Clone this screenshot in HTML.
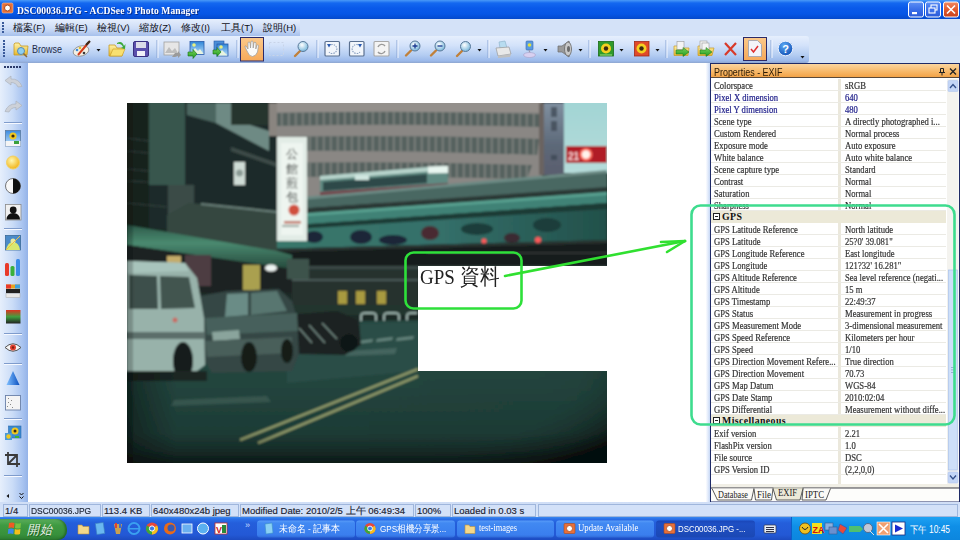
<!DOCTYPE html>
<html><head><meta charset="utf-8">
<style>
*{margin:0;padding:0;box-sizing:border-box}
html,body{width:960px;height:540px;overflow:hidden;background:#fff;font-family:"Liberation Sans",sans-serif}
.a{position:absolute}
#title{left:0;top:0;width:960px;height:19px;background:linear-gradient(#4a9af8 0,#1468f0 3px,#0a5aea 8px,#0656e6 14px,#0449cc 19px)}
#title .t{left:16.5px;top:3.5px;font:bold 10.3px "Liberation Serif",serif;letter-spacing:0.1px;color:#fff;white-space:nowrap;text-shadow:1px 1px 0 #0a2e8a;transform:scaleX(0.93);transform-origin:0 0;line-height:13px}
#menubar{left:0;top:19px;width:960px;height:17px;background:#d4e2f8}
#menuband{left:0;top:19px;width:300px;height:17px;background:linear-gradient(#e6effd,#cddcf6 55%,#a6c0ec)}
.mi{top:22px;font-size:9.5px;color:#101018;white-space:nowrap;line-height:12px}
#tbwrap{left:0;top:36px;width:960px;height:27px;background:#d6e4f8}
#toolbar{left:0;top:36px;width:809px;height:27px;background:linear-gradient(#e6effd,#d3e2fa 35%,#b4cdf2 70%,#9bb9ea 92%,#8ea6cf);border-radius:0 3px 3px 0}
.sep{top:41px;width:1px;height:18px;background:#7f9dd3;box-shadow:1px 0 0 #fff}
#lefttb{left:0;top:63px;width:28px;height:439px;background:linear-gradient(90deg,#e6effc,#cadcf7 45%,#a9c4f0 80%,#94b3e8)}
#viewer{left:28px;top:64px;width:678px;height:438px;background:#fff}
#splitter{left:706px;top:63px;width:4px;height:439px;background:linear-gradient(90deg,#fbfcff,#c7d8f5)}
#panel{left:710px;top:63px;width:250px;height:439px;background:#fff;border:1px solid #1e2a66}
#phead{left:711px;top:64px;width:248px;height:14px;background:linear-gradient(#fbd59f,#f7b767 60%,#f3a347);border-bottom:1px solid #5b4a3a}
#phead .t{left:3px;top:2px;font-size:10.5px;color:#2a1a05;white-space:nowrap;transform:scaleX(0.85);transform-origin:0 0;line-height:12px}
.row{position:absolute;left:711px;width:235px;height:12px;border-bottom:1px solid #ebeae4;font:9.8px "Liberation Serif",serif;color:#333;white-space:nowrap;line-height:12px;-webkit-text-stroke:0.2px currentColor}
.row .n{position:absolute;left:3px;top:1px;width:144px;overflow:hidden;transform:scaleX(0.88);transform-origin:0 0}
.row .v{position:absolute;left:134px;top:1px;width:114px;overflow:hidden;transform:scaleX(0.88);transform-origin:0 0}
.row.b{color:#20208a}
.grp{position:absolute;left:711px;width:235px;height:12px;background:#ece9d8;font:bold 9.8px "Liberation Serif",serif;color:#111;line-height:12px}
#coldiv{left:838px;top:79px;width:3px;height:408px;background:#ebe8dc}
#status{left:0;top:502px;width:960px;height:15px;background:#c6d8f4}
.sp{position:absolute;top:504px;height:13px;border:1px solid #9fb6dc;background:#d3e1f8;font-size:9.5px;color:#1a2232;-webkit-text-stroke:0.15px currentColor;line-height:11px;padding-left:1px;white-space:nowrap;overflow:hidden}
#taskbar{left:0;top:517px;width:960px;height:23px;background:linear-gradient(#3a8af0 0,#2a6fe8 2px,#245edb 6px,#2358d5 18px,#1c4bc0 23px)}
#start{left:0;top:518.5px;width:67px;height:21.5px;background:linear-gradient(#5cae5c,#3f9a42 30%,#37903b 75%,#2b7a30);border-radius:0 10px 9px 0;box-shadow:inset -2px 0 2px rgba(0,40,0,0.35)}
.tb{position:absolute;top:519px;height:17px;font-size:9.5px;color:#fff;white-space:nowrap;line-height:17px}
#tray{left:791px;top:517px;width:169px;height:23px;background:linear-gradient(#1fa2f3,#0f8fe7 40%,#0c86de);border-left:1px solid #0b5fc8}
.grp .box{position:absolute;left:2px;top:1.5px;width:7px;height:7px;border:1px solid #222;background:#fff}
.grp .box:after{content:"";position:absolute;left:1px;top:2px;width:3px;height:1px;background:#222}
.grp .gt{position:absolute;left:11px;top:-0.5px;letter-spacing:0.4px}
.st{display:inline-block;transform-origin:0 50%}
.tt{display:inline-block;transform-origin:0 50%}
</style></head><body>
<div id="title" class="a"><div class="a t">DSC00036.JPG - ACDSee 9 Photo Manager</div></div>
<div id="menubar" class="a"></div>
<div id="menuband" class="a"></div>
<!--TX-->
<svg class="a" style="left:0;top:0" width="960" height="36" viewBox="0 0 960 36">
<defs>
<linearGradient id="wbb" x1="0" y1="0" x2="0" y2="1"><stop offset="0" stop-color="#5d8ff5"/><stop offset="0.5" stop-color="#3a6ee8"/><stop offset="1" stop-color="#2a5ad8"/></linearGradient>
<linearGradient id="wbc" x1="0" y1="0" x2="0" y2="1"><stop offset="0" stop-color="#f08a64"/><stop offset="0.5" stop-color="#e25a2e"/><stop offset="1" stop-color="#c8421e"/></linearGradient>
</defs>
<rect x="2" y="3" width="11" height="10" rx="1.5" fill="#e8703a" stroke="#f8c8a0" stroke-width="0.6"/>
<circle cx="7.5" cy="8" r="3" fill="#fff" stroke="#a84a1a" stroke-width="1"/>
<rect x="908.5" y="2" width="15" height="15" rx="2" fill="url(#wbb)" stroke="#fff" stroke-width="1"/>
<rect x="912" y="12" width="5" height="2.2" fill="#fff"/>
<rect x="925.5" y="2" width="15" height="15" rx="2" fill="url(#wbb)" stroke="#fff" stroke-width="1"/>
<rect x="931" y="5" width="6" height="5" fill="none" stroke="#fff" stroke-width="1.1"/>
<rect x="929" y="8" width="6" height="5" fill="#3a6ee8" stroke="#fff" stroke-width="1.1"/>
<rect x="943.5" y="2" width="15" height="15" rx="2" fill="url(#wbc)" stroke="#fff" stroke-width="1"/>
<path d="M947,5.5 L955,13.5 M955,5.5 L947,13.5" stroke="#fff" stroke-width="1.6"/>
<g fill="#3a5a9a"><rect x="2" y="22" width="2" height="2"/><rect x="2" y="25" width="2" height="2"/><rect x="2" y="28" width="2" height="2"/><rect x="2" y="31" width="2" height="2"/></g>
</svg>

<!--/TX-->
<div class="a mi" style="left:13px">檔案(F)</div>
<div class="a mi" style="left:55px">編輯(E)</div>
<div class="a mi" style="left:97px">檢視(V)</div>
<div class="a mi" style="left:139px">縮放(Z)</div>
<div class="a mi" style="left:181px">修改(I)</div>
<div class="a mi" style="left:221px">工具(T)</div>
<div class="a mi" style="left:263px">說明(H)</div>
<div id="tbwrap" class="a"></div>
<div id="toolbar" class="a"></div>
<!--TB-->
<svg class="a" style="left:0;top:36px" width="809" height="27" viewBox="0 36 809 27">
<defs>
<linearGradient id="fold" x1="0" y1="0" x2="0" y2="1"><stop offset="0" stop-color="#fff2a8"/><stop offset="1" stop-color="#e6b82e"/></linearGradient>
<linearGradient id="sky2" x1="0" y1="0" x2="0" y2="1"><stop offset="0" stop-color="#2f86d8"/><stop offset="1" stop-color="#b9defa"/></linearGradient>
<linearGradient id="grn" x1="0" y1="0" x2="0" y2="1"><stop offset="0" stop-color="#7ad45a"/><stop offset="1" stop-color="#1f9a1f"/></linearGradient>
<linearGradient id="orng" x1="0" y1="0" x2="0" y2="1"><stop offset="0" stop-color="#fcc98a"/><stop offset="1" stop-color="#f6a95a"/></linearGradient>
<radialGradient id="lens" cx="0.4" cy="0.35" r="0.7"><stop offset="0" stop-color="#ffffff"/><stop offset="1" stop-color="#6fb3d9"/></radialGradient>
<radialGradient id="helpg" cx="0.4" cy="0.3" r="0.8"><stop offset="0" stop-color="#5aa8f4"/><stop offset="1" stop-color="#0b48b0"/></radialGradient>
</defs>
<!-- grip -->
<g fill="#3a5a9a"><rect x="3" y="40" width="2" height="2"/><rect x="3" y="43" width="2" height="2"/><rect x="3" y="46" width="2" height="2"/><rect x="3" y="49" width="2" height="2"/><rect x="3" y="52" width="2" height="2"/><rect x="3" y="55" width="2" height="2"/></g>
<!-- browse folder -->
<path d="M14,44 L14,55 L27,55 L28,46 L21,46 L19,43 L15,43 Z" fill="url(#fold)" stroke="#c79a24" stroke-width="0.8"/>
<circle cx="21" cy="51" r="3.5" fill="#8fd0f0" stroke="#5a8ab0" stroke-width="1"/>
<line x1="23.5" y1="53.5" x2="27" y2="57" stroke="#8a6a3a" stroke-width="1.5"/>
<text x="32" y="53.2" font-family="Liberation Sans" font-size="10.2" fill="#1e2a48" textLength="30" lengthAdjust="spacingAndGlyphs">Browse</text>
<!-- palette -->
<ellipse cx="81" cy="51" rx="8" ry="5" fill="#f4f0e4" stroke="#8a8a8a" stroke-width="0.8" transform="rotate(-15 81 51)"/>
<circle cx="77" cy="50" r="1.3" fill="#3a8ad8"/><circle cx="80" cy="48" r="1.3" fill="#e0c030"/><circle cx="84" cy="53" r="1.3" fill="#3a3a3a"/>
<line x1="78" y1="55" x2="89" y2="42" stroke="#d23a1a" stroke-width="2"/>
<line x1="86" y1="45" x2="90" y2="41" stroke="#3a2a1a" stroke-width="2.2"/>
<path d="M96.5,49 L100.5,49 L98.5,51.5 Z" fill="#111"/>
<!-- open folder -->
<path d="M109,45 L109,56 L122,56 L124,48 L117,48 L115,45 Z" fill="url(#fold)" stroke="#c79a24" stroke-width="0.8"/>
<path d="M110,56 L113,49 L125,49 L122,56 Z" fill="#f8e070" stroke="#c79a24" stroke-width="0.6"/>
<path d="M117,43 Q122,40 124,46 L125.5,44 L125,49 L121,48 L123,47 Q121,43 117,44 Z" fill="#3aa83a"/>
<!-- floppy -->
<rect x="133.5" y="41.5" width="15" height="15" rx="1.5" fill="#5b50ac" stroke="#3a3080" stroke-width="1"/>
<rect x="136" y="42" width="10" height="6" fill="#dcdce8"/>
<rect x="137" y="51" width="8" height="5" fill="#f0f0f8"/>
<!-- sep -->
<rect x="156.5" y="40" width="1" height="18" fill="#8aa6d6"/><rect x="157.5" y="40" width="1" height="18" fill="#f4f8ff"/>
<!-- grey image -->
<rect x="164" y="42" width="15" height="13" fill="#e6e6e6" stroke="#a0a0a0" stroke-width="0.8"/>
<path d="M165,53 L169,47 L172,51 L175,48 L178,53 Z" fill="#bdbdbd"/>
<path d="M172,57 L175,53 L178,53 L178,51 L181,55 L178,58 L178,56 L175,57 Z" fill="#9a9a9a"/>
<!-- image + arrow -->
<rect x="190" y="41.5" width="14" height="13" fill="url(#sky2)" stroke="#2a5aa8" stroke-width="0.8"/>
<circle cx="194" cy="45" r="1.8" fill="#e8f080"/>
<path d="M190.5,54 L195,48 L198,51 L200,49 L203.5,54 Z" fill="#e8f4e0"/>
<path d="M188,52 L193,52 L193,49.5 L197,54 L193,58.5 L193,56 L188,56 Z" fill="url(#grn)" stroke="#187018" stroke-width="0.6"/>
<!-- copy image -->
<rect x="214" y="41" width="10" height="10" fill="#4a8ed8" stroke="#2a5aa8" stroke-width="0.6"/>
<rect x="217" y="44" width="11" height="12" fill="url(#sky2)" stroke="#2a5aa8" stroke-width="0.8"/>
<circle cx="221" cy="47" r="1.8" fill="#e8f080"/>
<path d="M217.5,55.5 L222,50 L225,53 L227.5,55.5 Z" fill="#e8f4e0"/>
<path d="M213,50 L217,50 L217,47.5 L221,52 L217,56.5 L217,54 L213,54 Z" fill="url(#grn)" stroke="#187018" stroke-width="0.6"/>
<!-- sep -->
<rect x="236.5" y="40" width="1" height="18" fill="#8aa6d6"/><rect x="237.5" y="40" width="1" height="18" fill="#f4f8ff"/>
<!-- hand button -->
<rect x="240.5" y="37.5" width="23" height="23.5" fill="url(#orng)" stroke="#2c2a68" stroke-width="1"/>
<path d="M247,51 L245,47 Q244.5,45.5 246,46 L248,49 L248,42.5 Q249,41.5 250,42.5 L250.5,48 L251,41.5 Q252,40.5 253,41.5 L253.2,48 L254,42.5 Q255,41.8 256,42.8 L255.8,49 L257,45 Q258,44.5 258.5,45.5 L257.5,52 Q256,56 252.5,56.5 Q249,56.5 247,51 Z" fill="#fafafa" stroke="#9a9a9a" stroke-width="0.7"/>
<!-- dashed select -->
<rect x="269.5" y="42.5" width="14" height="13" fill="none" stroke="#c8d4e8" stroke-width="1" stroke-dasharray="2,2"/>
<!-- magnifier -->
<line x1="295" y1="56" x2="300" y2="51" stroke="#c0803a" stroke-width="2.4" stroke-linecap="round"/>
<circle cx="303" cy="46.5" r="5" fill="url(#lens)" stroke="#5a7a9a" stroke-width="1"/>
<!-- sep -->
<rect x="316.5" y="40" width="1" height="18" fill="#8aa6d6"/><rect x="317.5" y="40" width="1" height="18" fill="#f4f8ff"/>
<!-- rotate left -->
<rect x="325" y="41.5" width="14.5" height="14.5" rx="1" fill="#f2f6fb" stroke="#5a7090" stroke-width="1.2"/>
<path d="M329,46 A4.5,4.5 0 1 1 329,52" fill="none" stroke="#8aa0c0" stroke-width="1.1" stroke-dasharray="1.5,1"/>
<path d="M327,44 L331,44 L329,47.5 Z" fill="#2a5ab0"/>
<!-- rotate right -->
<rect x="349.5" y="41.5" width="14.5" height="14.5" rx="1" fill="#f2f6fb" stroke="#5a7090" stroke-width="1.2"/>
<path d="M360,46 A4.5,4.5 0 1 0 360,52" fill="none" stroke="#8aa0c0" stroke-width="1.1" stroke-dasharray="1.5,1"/>
<path d="M358,44 L362,44 L360,47.5 Z" fill="#2a5ab0"/>
<!-- rotate grey -->
<rect x="374" y="41.5" width="15" height="14.5" rx="1" fill="#f4f4f4" stroke="#a8a8a8" stroke-width="1.1"/>
<path d="M378,47 A4,4 0 0 1 385,46 M385,51 A4,4 0 0 1 378,52" fill="none" stroke="#9a9a9a" stroke-width="1.4"/>
<!-- sep -->
<rect x="396.5" y="40" width="1" height="18" fill="#8aa6d6"/><rect x="397.5" y="40" width="1" height="18" fill="#f4f8ff"/>
<!-- zoom in -->
<line x1="406" y1="55.5" x2="411" y2="50.5" stroke="#c0803a" stroke-width="2.4" stroke-linecap="round"/>
<circle cx="415" cy="46" r="5" fill="url(#lens)" stroke="#5a7a9a" stroke-width="1"/>
<path d="M412.5,46 L417.5,46 M415,43.5 L415,48.5" stroke="#1a3a90" stroke-width="1.3"/>
<!-- zoom out -->
<line x1="431" y1="55.5" x2="436" y2="50.5" stroke="#c0803a" stroke-width="2.4" stroke-linecap="round"/>
<circle cx="440" cy="46" r="5" fill="url(#lens)" stroke="#5a7a9a" stroke-width="1"/>
<path d="M437.5,46 L442.5,46" stroke="#1a3a90" stroke-width="1.3"/>
<!-- zoom -->
<line x1="457" y1="56" x2="462" y2="51" stroke="#c0803a" stroke-width="2.4" stroke-linecap="round"/>
<circle cx="465.5" cy="46.5" r="5" fill="url(#lens)" stroke="#5a7a9a" stroke-width="1"/>
<path d="M477.5,49 L481.5,49 L479.5,51.5 Z" fill="#111"/>
<!-- sep -->
<rect x="487.5" y="40" width="1" height="18" fill="#8aa6d6"/><rect x="488.5" y="40" width="1" height="18" fill="#f4f8ff"/>
<!-- printer -->
<path d="M499,42 L505,41 L507,48 L500,48 Z" fill="#b8dcf0" stroke="#8ab0c8" stroke-width="0.6"/>
<path d="M496,48 L509,47 L511,54 L498,56 Z" fill="#e8e8e8" stroke="#9a9a9a" stroke-width="0.7"/>
<path d="M498,56 L511,54 L510,57 L498,58 Z" fill="#c0c0c0"/>
<!-- desktop -->
<rect x="526" y="41" width="7" height="9" rx="1" fill="#5a9ae0" stroke="#3a6ab0" stroke-width="0.6"/>
<circle cx="529.5" cy="45" r="1.8" fill="#e0e040"/>
<path d="M529,50 L530,53" stroke="#9a9ab0" stroke-width="1.2"/>
<ellipse cx="529.5" cy="55" rx="6" ry="2.5" fill="#d8d0f0" stroke="#a8a0c8" stroke-width="0.6"/>
<path d="M543.5,49 L547.5,49 L545.5,51.5 Z" fill="#111"/>
<!-- speaker -->
<path d="M558,46 L562,46 L569,41 L571,49 L569,57 L562,52 L558,52 Z" fill="#9a9a9a" stroke="#6a6a6a" stroke-width="0.7"/>
<ellipse cx="568" cy="49" rx="3.5" ry="7" fill="#c8c8c8" stroke="#6a6a6a" stroke-width="0.8"/>
<ellipse cx="568.5" cy="49" rx="1.5" ry="3" fill="#6a6a6a"/>
<path d="M578.5,49 L582.5,49 L580.5,51.5 Z" fill="#111"/>
<!-- sep -->
<rect x="588.5" y="40" width="1" height="18" fill="#8aa6d6"/><rect x="589.5" y="40" width="1" height="18" fill="#f4f8ff"/>
<!-- green sunflower -->
<rect x="598.5" y="41.5" width="15" height="14.5" fill="#2f9a2a" stroke="#1a6a18" stroke-width="0.8"/>
<circle cx="606" cy="48.5" r="5" fill="#f4d020"/>
<circle cx="606" cy="48.5" r="2.2" fill="#3a2a10"/>
<path d="M600,55 L612,55" stroke="#a0e080" stroke-width="1"/>
<path d="M619.5,49 L623.5,49 L621.5,51.5 Z" fill="#111"/>
<!-- red sunflower -->
<rect x="634.5" y="41.5" width="14.5" height="14.5" fill="#e04a2a" stroke="#a02a18" stroke-width="0.8"/>
<circle cx="641.5" cy="48.5" r="5" fill="#f4d020"/>
<circle cx="641.5" cy="48.5" r="2.2" fill="#3a2a10"/>
<path d="M655.5,49 L659.5,49 L657.5,51.5 Z" fill="#111"/>
<!-- sep -->
<rect x="665.5" y="40" width="1" height="18" fill="#8aa6d6"/><rect x="666.5" y="40" width="1" height="18" fill="#f4f8ff"/>
<!-- move folder -->
<path d="M674,46 L674,55.5 L688,55.5 L689,48 L682,48 L680,46 Z" fill="url(#fold)" stroke="#c79a24" stroke-width="0.7"/>
<rect x="677" y="41.5" width="7" height="8" fill="#f4f4f4" stroke="#9a9a9a" stroke-width="0.6"/>
<path d="M676,50 L683,50 L683,47.5 L689,52 L683,56.5 L683,54 L676,54 Z" fill="url(#grn)" stroke="#187018" stroke-width="0.5"/>
<!-- copy folder -->
<path d="M698,46 L698,55.5 L712,55.5 L714,48 L706,48 L704,46 Z" fill="url(#fold)" stroke="#c79a24" stroke-width="0.7"/>
<rect x="700" y="41" width="7" height="8" fill="#f4f4f4" stroke="#9a9a9a" stroke-width="0.6"/>
<rect x="702" y="43" width="7" height="8" fill="#f4f4f4" stroke="#9a9a9a" stroke-width="0.6"/>
<path d="M700,50 L706,50 L706,47.5 L712,52 L706,56.5 L706,54 L700,54 Z" fill="url(#grn)" stroke="#187018" stroke-width="0.5"/>
<!-- red X -->
<path d="M725,43 L736,55 M736,43 L725,55" stroke="#d83a2a" stroke-width="2.2"/>
<!-- props button -->
<rect x="743.5" y="37.5" width="23" height="23" fill="url(#orng)" stroke="#2c2a68" stroke-width="1"/>
<path d="M748.5,40.5 L757.5,40.5 L761.5,44.5 L761.5,56.5 L748.5,56.5 Z" fill="#f4f4f8" stroke="#9aa0b0" stroke-width="0.8"/>
<path d="M751,49 L753.5,52 L758,46" fill="none" stroke="#e03030" stroke-width="1.5"/>
<!-- sep -->
<rect x="770.5" y="40" width="1" height="18" fill="#8aa6d6"/><rect x="771.5" y="40" width="1" height="18" fill="#f4f8ff"/>
<!-- help -->
<circle cx="785.5" cy="48.5" r="7.3" fill="url(#helpg)" stroke="#e8f0ff" stroke-width="1"/>
<text x="785.5" y="52.5" font-family="Liberation Sans" font-weight="bold" font-size="11" fill="#fff" text-anchor="middle">?</text>
<path d="M800.5,56 L804.5,56 L802.5,58.5 Z" fill="#111"/>
</svg>

<!--/TB-->
<div id="lefttb" class="a"></div>
<!--LTB-->
<svg class="a" style="left:0;top:63px" width="28" height="440" viewBox="0 63 28 440">
<defs>
<radialGradient id="sunG" cx="0.4" cy="0.35" r="0.7"><stop offset="0" stop-color="#fff8b0"/><stop offset="1" stop-color="#f0b010"/></radialGradient>
<linearGradient id="skyL" x1="0" y1="0" x2="0" y2="1"><stop offset="0" stop-color="#3a8ae0"/><stop offset="1" stop-color="#c8e6fa"/></linearGradient>
</defs>
<g fill="#2a3a6a"><rect x="4" y="66" width="2" height="2"/><rect x="7" y="66" width="2" height="2"/><rect x="10" y="66" width="2" height="2"/><rect x="13" y="66" width="2" height="2"/><rect x="16" y="66" width="2" height="2"/><rect x="19" y="66" width="2" height="2"/></g>
<!-- undo grey -->
<path d="M5,80.5 L11,76 L11,79 Q19,78.5 22,86.5 L18,87 Q16,82.5 11,82.5 L11,85 Z" fill="#cdd1d8" stroke="#aeb3bc" stroke-width="0.7"/>
<!-- redo grey -->
<path d="M22,105.5 L16,101 L16,104 Q8,103.5 5,111.5 L9,112 Q11,107.5 16,107.5 L16,110 Z" fill="#cdd1d8" stroke="#aeb3bc" stroke-width="0.7"/>
<rect x="4" y="122" width="18" height="1" fill="#7f9ccc"/><rect x="4" y="123" width="18" height="1" fill="#f6f9ff"/>
<!-- sunflower photo -->
<rect x="5.5" y="130.5" width="15" height="15.5" fill="url(#skyL)" stroke="#5a7aa0" stroke-width="0.8"/>
<circle cx="13" cy="136" r="3.6" fill="#f0c820"/><circle cx="13" cy="136" r="1.6" fill="#3a2a10"/>
<rect x="5.5" y="141" width="15" height="5" fill="#f4f4f4"/>
<rect x="14" y="141" width="5" height="3" fill="#3aa03a"/>
<!-- sun -->
<circle cx="13" cy="162.5" r="6.5" fill="url(#sunG)" stroke="#f4d060" stroke-width="1"/>
<!-- contrast -->
<circle cx="13" cy="186" r="7.5" fill="#f8f8f8" stroke="#555" stroke-width="0.8"/>
<path d="M13,178.5 A7.5,7.5 0 0 1 13,193.5 Z" fill="#111"/>
<!-- silhouette -->
<rect x="5.5" y="204.5" width="15.5" height="15.5" fill="#f0f0f0" stroke="#8a8a8a" stroke-width="0.8"/>
<circle cx="13.2" cy="210" r="3.4" fill="#111"/>
<path d="M6.5,219.5 Q7,213 13.2,213 Q19.5,213 20,219.5 Z" fill="#111"/>
<rect x="4" y="228" width="18" height="1" fill="#7f9ccc"/><rect x="4" y="229" width="18" height="1" fill="#f6f9ff"/>
<!-- image landscape -->
<rect x="5.5" y="235.5" width="15" height="14.5" fill="#4a8ac8" stroke="#3a6a98" stroke-width="0.8"/>
<path d="M6,250 Q8,241 14,242 Q19,243 20,250 Z" fill="#d8e870"/>
<circle cx="13" cy="241" r="2.5" fill="#e8e8a0"/>
<path d="M6,250 L20,236" stroke="#f0c040" stroke-width="1"/>
<!-- histogram bars -->
<rect x="5" y="263" width="4" height="13" rx="1.5" fill="#e83a2a"/>
<rect x="10.5" y="266" width="4" height="10" rx="1.5" fill="#3ab03a"/>
<rect x="16" y="259" width="4" height="17" rx="1.5" fill="#3a8ae8"/>
<!-- color bars -->
<rect x="6" y="284.5" width="14" height="4" fill="#e8a020"/>
<rect x="6" y="284.5" width="5" height="4" fill="#e83a2a"/>
<rect x="15" y="284.5" width="5" height="4" fill="#3aa0e0"/>
<rect x="6" y="289" width="14" height="4" fill="#222"/>
<rect x="6" y="293.5" width="14" height="4" fill="#e8e8e8" stroke="#aaa" stroke-width="0.5"/>
<!-- gradient square -->
<defs><linearGradient id="gsq" x1="0" y1="0" x2="0" y2="1"><stop offset="0" stop-color="#e03020"/><stop offset="0.5" stop-color="#40a040"/><stop offset="1" stop-color="#222"/></linearGradient></defs>
<rect x="6" y="310" width="14.5" height="13.5" fill="url(#gsq)"/>
<rect x="4" y="333" width="18" height="1" fill="#7f9ccc"/><rect x="4" y="334" width="18" height="1" fill="#f6f9ff"/>
<!-- eye -->
<path d="M5,347.5 Q13,340 21,347.5 Q13,355 5,347.5 Z" fill="#f4f4f4" stroke="#555" stroke-width="1"/>
<circle cx="13" cy="347.5" r="3" fill="#e04030"/>
<circle cx="13" cy="347.5" r="1.2" fill="#802010"/>
<rect x="4" y="363" width="18" height="1" fill="#7f9ccc"/><rect x="4" y="364" width="18" height="1" fill="#f6f9ff"/>
<!-- triangle -->
<defs><linearGradient id="tri" x1="0" y1="0" x2="1" y2="0"><stop offset="0" stop-color="#80c0ff"/><stop offset="1" stop-color="#0a50c0"/></linearGradient></defs>
<path d="M13,371 L19.5,385 L6.5,385 Z" fill="url(#tri)"/>
<!-- noise -->
<rect x="5.5" y="395.5" width="15" height="14.5" fill="#f4f4f4" stroke="#6a80a8" stroke-width="0.9"/>
<g fill="#8a8a8a"><rect x="8" y="398" width="1" height="1"/><rect x="11" y="400" width="1" height="1"/><rect x="8" y="402" width="1" height="1"/><rect x="10" y="404" width="1" height="1"/><rect x="7" y="406" width="1" height="1"/><rect x="12" y="407" width="1" height="1"/></g>
<rect x="4" y="418" width="18" height="1" fill="#7f9ccc"/><rect x="4" y="419" width="18" height="1" fill="#f6f9ff"/>
<!-- sunflower group -->
<rect x="8.5" y="426" width="12.5" height="12" fill="#3a8ad0" stroke="#2a6ab0" stroke-width="0.6"/>
<circle cx="15" cy="431" r="3.5" fill="#f0c820"/><circle cx="15" cy="431" r="1.5" fill="#3a2a10"/>
<rect x="5" y="433" width="7" height="7" fill="#4a9ad8"/>
<circle cx="8.5" cy="436.5" r="2.2" fill="#f0c820"/>
<rect x="15" y="436" width="4" height="2" fill="#3ab03a"/>
<!-- crop -->
<path d="M8,452 L8,464 L20,464 M5,455 L17,455 L17,467 M8,464 L17,455" fill="none" stroke="#3a3a3a" stroke-width="1.8"/>
<rect x="4" y="475" width="18" height="1" fill="#7f9ccc"/><rect x="4" y="476" width="18" height="1" fill="#f6f9ff"/>
<!-- arrows -->
<path d="M9,494 L6.5,496 L9,498 Z" fill="#111"/>
<path d="M19.5,493 L21.5,495 L23.5,493 M19.5,496.5 L21.5,498.5 L23.5,496.5" fill="none" stroke="#111" stroke-width="1"/>
</svg>

<!--/LTB-->
<div id="viewer" class="a"></div>
<div id="splitter" class="a"></div>
<!--PHOTO-->
<svg width="480" height="360" viewBox="0 0 480 360" style="position:absolute;left:127px;top:103px">
<defs>
<filter id="bl" x="-2%" y="-2%" width="104%" height="104%"><feGaussianBlur stdDeviation="0.8"/></filter>
<linearGradient id="road" x1="0" y1="0" x2="0" y2="1"><stop offset="0" stop-color="#284a43"/><stop offset="0.45" stop-color="#22443d"/><stop offset="0.85" stop-color="#1c3833"/><stop offset="1" stop-color="#101e1b"/></linearGradient>
<radialGradient id="roadR" cx="0.0" cy="0.0" r="1.2"><stop offset="0" stop-color="#22403a" stop-opacity="0"/><stop offset="0.7" stop-color="#1b332e" stop-opacity="0.1"/><stop offset="0.9" stop-color="#0c1614" stop-opacity="0.55"/><stop offset="1" stop-color="#040807" stop-opacity="0.95"/></radialGradient>
<linearGradient id="vigL" x1="0" y1="0" x2="1" y2="0"><stop offset="0" stop-color="#000" stop-opacity="0.35"/><stop offset="0.08" stop-color="#000" stop-opacity="0"/></linearGradient>
<linearGradient id="sky" x1="0" y1="0" x2="0" y2="1"><stop offset="0" stop-color="#9fd4d4"/><stop offset="1" stop-color="#b6dcda"/></linearGradient>
<linearGradient id="awn" x1="0" y1="0" x2="0" y2="1"><stop offset="0" stop-color="#2e5a4a"/><stop offset="0.4" stop-color="#4a8a70"/><stop offset="1" stop-color="#24463a"/></linearGradient>
<linearGradient id="mur" x1="0" y1="0" x2="1" y2="0"><stop offset="0" stop-color="#3a786c"/><stop offset="0.5" stop-color="#35706a"/><stop offset="1" stop-color="#22504a"/></linearGradient>
<linearGradient id="tsign" x1="0" y1="0" x2="0" y2="1"><stop offset="0" stop-color="#8090a0"/><stop offset="0.6" stop-color="#5c6878"/><stop offset="1" stop-color="#5a5e6e"/></linearGradient>
<clipPath id="pc"><rect width="480" height="360"/></clipPath>
<pattern id="mull" x="0" y="0" width="7" height="10" patternUnits="userSpaceOnUse"><rect x="0" y="0" width="1.6" height="10" fill="#8a8e8a" opacity="0.75"/></pattern>
<clipPath id="bands"><path d="M150,10 Q280,7 412,11 L412,24 Q280,20 150,23 Z"/><path d="M150,34 Q280,31 412,36 L410,52 Q280,47 150,48 Z"/><path d="M150,60 Q280,58 405,62 L400,76 Q280,73 150,74 Z"/></clipPath>
<linearGradient id="vl" x1="0" y1="0" x2="1" y2="0"><stop offset="0" stop-color="#000" stop-opacity="0.45"/><stop offset="1" stop-color="#000" stop-opacity="0"/></linearGradient>
<linearGradient id="vb" x1="0" y1="0" x2="0" y2="1"><stop offset="0" stop-color="#000" stop-opacity="0"/><stop offset="1" stop-color="#000" stop-opacity="0.5"/></linearGradient>
</defs>
<rect width="480" height="360" fill="#1e2a27"/>
<g clip-path="url(#pc)"><g filter="url(#bl)">
<rect x="-10" y="-10" width="500" height="380" fill="#1e2a27"/>
<!-- big building -->
<rect x="140" y="-10" width="275" height="110" fill="#8a8784"/>
<rect x="140" y="-10" width="275" height="19" fill="#94908c"/>
<path d="M150,10 Q280,7 412,11 L412,24 Q280,20 150,23 Z" fill="#56625f"/>
<path d="M150,34 Q280,31 412,36 L410,52 Q280,47 150,48 Z" fill="#56625f"/>
<path d="M150,60 Q280,58 405,62 L400,76 Q280,73 150,74 Z" fill="#56625f"/>
<g clip-path="url(#bands)"><rect x="140" y="0" width="275" height="80" fill="url(#mull)"/></g>
<!-- tall sign -->
<rect x="412" y="0" width="6" height="72" fill="#6a6460"/><rect x="417" y="0" width="20" height="72" fill="url(#tsign)"/>
<g fill="#3a4450" opacity="0.7"><rect x="424" y="4" width="6" height="10"/><rect x="424" y="18" width="6" height="10"/><rect x="424" y="52" width="6" height="5"/></g>
<!-- sky -->
<rect x="437" y="-10" width="53" height="80" fill="url(#sky)"/>
<!-- traffic light -->
<rect x="439" y="43" width="41" height="17" fill="#b01c26"/>
<text x="441" y="56.5" font-family="Liberation Sans" font-weight="bold" font-size="10" fill="#ffd8d8">21</text>
<circle cx="459" cy="51.5" r="6.5" fill="#ff6a5a"/>
<circle cx="459" cy="51.5" r="4.2" fill="#fff4ec"/>
<!-- bus -->
<polygon points="193,73 302,64 321,63 321,84 193,97" fill="#5e8a82"/>
<polygon points="193,73 302,64 321,63 321,67 193,77" fill="#b8d4cc"/>
<polygon points="196,79 300,71 300,80 196,88" fill="#2e4a48"/>
<polygon points="193,89 321,80 321,84 193,95" fill="#74424a"/>
<polygon points="301,63.5 321,63 321,70 301,70.5" fill="#e8f6f0"/>
<rect x="228" y="72" width="14" height="5" fill="#d0e6e0"/>
<!-- overpass railing -->
<polygon points="140,98 480,68 480,85 140,108" fill="#4a6862"/>
<polygon points="140,97 480,67 480,70 140,100" fill="#6c8a84"/>
<polygon points="140,108 480,84 480,91 140,114" fill="#2a3936"/>
<!-- overpass beam -->
<polygon points="140,113 480,89 480,100 140,124" fill="#3f8276"/>
<polygon points="140,113 480,89 480,92 140,116" fill="#58a090"/>
<!-- mural -->
<polygon points="140,124 480,100 480,138 140,147" fill="url(#mur)"/>
<polygon points="140,124 480,100 480,106 140,128" fill="#1f3a36"/>
<ellipse cx="187" cy="134" rx="9" ry="6" fill="#1c2838"/>
<ellipse cx="234" cy="134" rx="11" ry="7" fill="#1e2838"/>
<ellipse cx="266" cy="137" rx="14" ry="5" fill="#1e2838"/>
<ellipse cx="303" cy="130" rx="9" ry="7" fill="#4a2a30"/>
<ellipse cx="350" cy="126" rx="16" ry="6" fill="#1e3e3a"/>
<ellipse cx="420" cy="122" rx="14" ry="7" fill="#1e3e3a"/>
<ellipse cx="385" cy="135" rx="8" ry="5" fill="#3a2a30"/>
<!-- dark under overpass -->
<polygon points="140,146 480,137 480,168 140,168" fill="#171e1c"/>
<polygon points="140,146 480,137 480,140 140,149" fill="#2a3431"/><rect x="300" y="149" width="180" height="2" fill="#2e3530"/>
<rect x="140" y="163" width="340" height="3" fill="#3a4a46"/>
<circle cx="357" cy="138" r="2.5" fill="#ff5a5a"/>
<circle cx="411" cy="137" r="3" fill="#ff5a5a"/>
<!-- left building -->
<polygon points="-10,-10 150,-10 150,128 -10,124" fill="#1f2c29"/><rect x="-10" y="-10" width="32" height="140" fill="#18221f"/>
<rect x="22" y="-10" width="36" height="92" fill="#38564e"/>
<rect x="41" y="82" width="26" height="40" fill="#3a4c47"/>
<g stroke="#3a4a46" stroke-width="1" opacity="0.8"><line x1="0" y1="35" x2="22" y2="38"/><line x1="0" y1="48" x2="22" y2="50"/><line x1="0" y1="66" x2="22" y2="68"/><line x1="0" y1="78" x2="22" y2="79"/><line x1="0" y1="100" x2="40" y2="104"/></g>
<polygon points="60,0 89,0 89,20 60,12" fill="#4c6660"/>
<polygon points="89,0 104,0 104,16 142,28 142,48 89,20" fill="#6e8a84"/>
<rect x="104" y="0" width="38" height="22" fill="#28342f"/>
<polygon points="142,0 150,0 150,33 142,33" fill="#8a8580"/>
<polygon points="104,44 150,60 150,64 104,48" fill="#3e4c48"/>
<rect x="107" y="59" width="11" height="23" fill="#cfdcd6"/>
<circle cx="112.5" cy="70" r="3.5" fill="#8a9a94"/>
<polygon points="62,100 150,108 150,148 40,148 40,112" fill="#35463f"/>
<polygon points="74,100 150,108 150,110 74,102" fill="#6a807a"/>
<!-- white sign -->
<rect x="150" y="34" width="30" height="104" fill="#e2ece6"/>
<rect x="154" y="40" width="22" height="92" fill="#eef5f0"/>
<g fill="#303432" font-family="Liberation Serif" font-size="12" text-anchor="middle">
<text x="165" y="55">公</text><text x="165" y="70">館</text><text x="165" y="84">煎</text><text x="165" y="98">包</text></g>
<circle cx="167" cy="107" r="5.5" fill="#d0503e"/>
<rect x="157" y="118" width="17" height="2.5" fill="#c07060"/>
<rect x="155" y="122" width="17" height="2" fill="#9aa8a2"/>
<!-- green awning -->
<polygon points="0,122 150,148 165,152 165,167 150,165 0,142" fill="url(#awn)"/>
<!-- shop under awning -->
<polygon points="0,142 165,166 165,190 0,190" fill="#1c2421"/>
<rect x="40" y="153" width="14" height="9" fill="#c4ac6a"/>
<rect x="58" y="152" width="26" height="31" fill="#4e3e42"/>
<rect x="116" y="162" width="17" height="25" fill="#aaa050"/>
<ellipse cx="144" cy="165" rx="6" ry="3.5" fill="#eef4f2"/>
<!-- under overpass area right of awning -->
<rect x="165" y="166" width="126" height="40" fill="#26312d"/>
<rect x="165" y="176" width="126" height="2" fill="#4a5a56"/>
<rect x="160" y="156" width="22" height="20" fill="#3e524c"/>
<g fill="#a89a40"><rect x="211" y="188" width="9" height="13"/><rect x="229" y="188" width="9" height="13"/><rect x="250" y="188" width="9" height="13"/></g>
<rect x="165" y="202" width="126" height="10" fill="#23342e"/>
<g fill="none" stroke="#98aea8" stroke-width="2"><path d="M199,219 L199,213 Q199,210 203,210 L209,210 Q213,210 213,213 L213,219"/><path d="M234,219 L234,213 Q234,210 238,210 L245,210 Q249,210 249,213 L249,219"/><path d="M257,219 L257,213 Q257,210 261,210 L268,210 Q272,210 272,213 L272,219"/><path d="M280,219 L280,213 Q280,210 284,210 L290,210"/></g>
<!-- road -->
<polygon points="-10,222 490,214 490,370 -10,370" fill="url(#road)"/>
<polygon points="160,222 291,220 291,268 160,280" fill="#2c4d47"/>
<rect x="240" y="268" width="250" height="102" fill="url(#roadR)" opacity="0.9"/>
<g fill="#8aa8a0" opacity="0.6"><polygon points="231,238 246,236 245,239 230,241"/><polygon points="250,236 266,234 265,237 249,239"/><polygon points="270,235 287,233 286,236 269,238"/></g>
<polygon points="220,248 270,245 268,251 218,253" fill="#6a8a84" opacity="0.4"/>
<!-- road marking -->
<polygon points="47,297 140,293 144,299 44,303" fill="#46625c" opacity="0.6"/>
<!-- yellow lines -->
<line x1="113" y1="337" x2="291" y2="266" stroke="#8c9668" stroke-width="2.6"/>
<line x1="131" y1="340" x2="291" y2="273" stroke="#8c9668" stroke-width="2.6"/>
<!-- motorcycles -->
<polygon points="160,212 210,208 232,218 234,242 218,252 172,251 160,240" fill="#1b2422"/>
<g stroke="#7a908a" stroke-width="1.2" fill="none"><path d="M172,225 L185,240"/><path d="M182,222 L198,240"/><path d="M195,220 L210,236"/></g>
<circle cx="222" cy="240" r="9" fill="#111816"/>
<!-- car -->
<polygon points="73,193 100,188 152,186 165,198 170,215 172,250 165,268 85,270 73,250" fill="#344644"/>
<polygon points="100,191 121,190 121,212 98,214" fill="#6a8c86"/>
<polygon points="124,190 150,188 160,208 124,212" fill="#587670"/>
<polygon points="78,215 170,210 171,228 80,232" fill="#46605b"/>
<polygon points="85,229 112,227 113,236 86,238" fill="#8aa49c"/>
<polygon points="78,238 165,234 165,250 80,254" fill="#4a5e5a"/>
<ellipse cx="122" cy="254" rx="8" ry="15" fill="#131a18"/>
<ellipse cx="160" cy="248" rx="6" ry="12" fill="#131a18"/>
<!-- white van -->
<polygon points="0,158 58,160 70,175 77,215 78,262 70,268 0,270" fill="#98b2aa"/>
<polygon points="0,158 58,160 62,168 0,170" fill="#a8c4bc"/>
<polygon points="2,172 30,173 31,206 2,206" fill="#3e504c"/>
<polygon points="33,173 62,174 68,205 34,206" fill="#42544f"/>
<rect x="0" y="229" width="78" height="7" fill="#5c6e6a"/>
<circle cx="48" cy="217" r="2.5" fill="#c86a60"/>
<ellipse cx="56" cy="258" rx="10" ry="19" fill="#151c1a"/>
<rect x="0" y="268" width="80" height="10" fill="#1a2624"/>
<rect x="-10" y="270" width="60" height="100" fill="url(#vl)"/><rect x="-10" y="330" width="500" height="40" fill="url(#vb)"/><rect x="-10" y="0" width="16" height="370" fill="#000" opacity="0.2"/>
</g>
</g>
<!-- white cutout -->
<rect x="291" y="163" width="189" height="105" fill="#fff"/>
</svg>

<!--/PHOTO-->
<div id="panel" class="a"></div>
<div id="phead" class="a"><div class="a t">Properties - EXIF</div></div>
<div id="coldiv" class="a"></div>
<div class="row" style="top:79px"><span class="n">Colorspace</span><span class="v">sRGB</span></div>
<div class="row b" style="top:91px"><span class="n">Pixel X dimension</span><span class="v">640</span></div>
<div class="row b" style="top:103px"><span class="n">Pixel Y dimension</span><span class="v">480</span></div>
<div class="row" style="top:115px"><span class="n">Scene type</span><span class="v">A directly photographed i...</span></div>
<div class="row" style="top:127px"><span class="n">Custom Rendered</span><span class="v">Normal process</span></div>
<div class="row" style="top:139px"><span class="n">Exposure mode</span><span class="v">Auto exposure</span></div>
<div class="row" style="top:151px"><span class="n">White balance</span><span class="v">Auto white balance</span></div>
<div class="row" style="top:163px"><span class="n">Scene capture type</span><span class="v">Standard</span></div>
<div class="row" style="top:175px"><span class="n">Contrast</span><span class="v">Normal</span></div>
<div class="row" style="top:187px"><span class="n">Saturation</span><span class="v">Normal</span></div>
<div class="row" style="top:199px"><span class="n">Sharpness</span><span class="v">Normal</span></div>
<div class="grp" style="top:211px"><span class="box"></span><span class="gt">GPS</span></div>
<div class="row" style="top:223px"><span class="n">GPS Latitude Reference</span><span class="v">North latitude</span></div>
<div class="row" style="top:235px"><span class="n">GPS Latitude</span><span class="v">25?0' 39.081&quot;</span></div>
<div class="row" style="top:247px"><span class="n">GPS Longitude Reference</span><span class="v">East longitude</span></div>
<div class="row" style="top:259px"><span class="n">GPS Longitude</span><span class="v">121?32' 16.281&quot;</span></div>
<div class="row" style="top:271px"><span class="n">GPS Altitude Reference</span><span class="v">Sea level reference (negati...</span></div>
<div class="row" style="top:283px"><span class="n">GPS Altitude</span><span class="v">15 m</span></div>
<div class="row" style="top:295px"><span class="n">GPS Timestamp</span><span class="v">22:49:37</span></div>
<div class="row" style="top:307px"><span class="n">GPS Status</span><span class="v">Measurement in progress</span></div>
<div class="row" style="top:319px"><span class="n">GPS Measurement Mode</span><span class="v">3-dimensional measurement</span></div>
<div class="row" style="top:331px"><span class="n">GPS Speed Reference</span><span class="v">Kilometers per hour</span></div>
<div class="row" style="top:343px"><span class="n">GPS Speed</span><span class="v">1/10</span></div>
<div class="row" style="top:355px"><span class="n">GPS Direction Movement Refere...</span><span class="v">True direction</span></div>
<div class="row" style="top:367px"><span class="n">GPS Direction Movement</span><span class="v">70.73</span></div>
<div class="row" style="top:379px"><span class="n">GPS Map Datum</span><span class="v">WGS-84</span></div>
<div class="row" style="top:391px"><span class="n">GPS Date Stamp</span><span class="v">2010:02:04</span></div>
<div class="row" style="top:403px"><span class="n">GPS Differential</span><span class="v">Measurement without diffe...</span></div>
<div class="grp" style="top:415px"><span class="box"></span><span class="gt">Miscellaneous</span></div>
<div class="row" style="top:427px"><span class="n">Exif version</span><span class="v">2.21</span></div>
<div class="row" style="top:439px"><span class="n">FlashPix version</span><span class="v">1.0</span></div>
<div class="row" style="top:451px"><span class="n">File source</span><span class="v">DSC</span></div>
<div class="row" style="top:463px"><span class="n">GPS Version ID</span><span class="v">(2,2,0,0)</span></div>
<div class="row" style="top:475px"><span class="n"></span><span class="v"></span></div>
<!--PX-->
<svg class="a" style="left:700px;top:60px" width="260" height="450" viewBox="700 60 260 450">
<!-- header icons -->
<path d="M940.5,68.5 L943.5,68.5 L943.5,72.5 M940.5,68.5 L940.5,72.5 M939,72.5 L945,72.5 M942,72.5 L942,75.5" fill="none" stroke="#222" stroke-width="1"/>
<path d="M950,68.5 L956,74.5 M956,68.5 L950,74.5" stroke="#222" stroke-width="1.3"/>
<!-- scrollbar -->
<rect x="947" y="79" width="11.5" height="408" fill="#f4f3ef"/>
<rect x="948" y="80.5" width="10" height="11" rx="1" fill="#c3d5f6" stroke="#b2c8ee" stroke-width="0.6"/>
<path d="M950,88 L953,84.5 L956,88" fill="none" stroke="#34508a" stroke-width="1.3"/>
<rect x="948.3" y="270" width="9" height="200" fill="#cddff9" stroke="#a8c0ea" stroke-width="0.7"/>
<g fill="#8aa0c8"><rect x="951" y="367" width="4" height="0.8"/><rect x="951" y="369.5" width="4" height="0.8"/><rect x="951" y="372" width="4" height="0.8"/></g>
<rect x="948" y="472" width="10" height="11" rx="1" fill="#c3d5f6" stroke="#b2c8ee" stroke-width="0.6"/>
<path d="M950,475.5 L953,479 L956,475.5" fill="none" stroke="#34508a" stroke-width="1.3"/>
<!-- bottom beige band + tab strip -->
<rect x="711" y="484" width="248" height="4" fill="#f1efe6"/>
<rect x="711" y="487.5" width="248" height="1.2" fill="#3a3a44"/>
<rect x="711" y="488.7" width="248" height="12.8" fill="#fdfdfb"/>
<g fill="#fbfaf6" stroke="#4a4a4a" stroke-width="0.9">
<path d="M712,488.5 L717.5,500 L751.5,500 L754,488.5"/>
<path d="M754,488.5 L755.5,500 L771.5,500 L773,488.5"/>
<path d="M797,500 L803,488.5 M803,488.5 L802,500 L826,500 L830.5,488.5"/>
</g>
<path d="M773,488.5 L776.5,500 L800,500 L803,488.5 Z" fill="#ece9d8" stroke="#4a4a4a" stroke-width="0.9"/>
<rect x="773.5" y="487.5" width="29" height="1.3" fill="#ece9d8"/>
<text x="718" y="497.5" font-family="Liberation Serif" font-size="9.5" fill="#222" textLength="30" lengthAdjust="spacingAndGlyphs">Database</text>
<text x="757" y="497.5" font-family="Liberation Serif" font-size="9.5" fill="#222" textLength="14" lengthAdjust="spacingAndGlyphs">File</text>
<text x="778" y="495.5" font-family="Liberation Serif" font-size="9.5" fill="#222" textLength="19" lengthAdjust="spacingAndGlyphs">EXIF</text>
<text x="805" y="497.5" font-family="Liberation Serif" font-size="9.5" fill="#222" textLength="19" lengthAdjust="spacingAndGlyphs">IPTC</text>
</svg>

<!--/PX-->
<!--BOT-->
<div class="a" style="left:0;top:502px;width:960px;height:15px;background:linear-gradient(#d0def6,#d6e4f9)"></div>
<div class="sp" style="left:3px;width:25px"><span class="st">1/4</span></div>
<div class="sp" style="left:29px;width:72px"><span class="st" style="transform:scaleX(0.89)">DSC00036.JPG</span></div>
<div class="sp" style="left:102px;width:48px"><span class="st">113.4 KB</span></div>
<div class="sp" style="left:151px;width:88px"><span class="st">640x480x24b jpeg</span></div>
<div class="sp" style="left:240px;width:174px"><span class="st">Modified Date: 2010/2/5 上午 06:49:34</span></div>
<div class="sp" style="left:415px;width:36px"><span class="st">100%</span></div>
<div class="sp" style="left:452px;width:84px"><span class="st">Loaded in 0.03 s</span></div>
<div class="sp" style="left:538px;width:420px"></div>
<div id="taskbar" class="a"></div>
<div id="start" class="a"></div>
<svg class="a" style="left:0;top:517px" width="960" height="23" viewBox="0 517 960 23">
<defs>
<linearGradient id="tbb" x1="0" y1="0" x2="0" y2="1"><stop offset="0" stop-color="#5a9cf8"/><stop offset="0.15" stop-color="#4189f2"/><stop offset="0.85" stop-color="#3a7eee"/><stop offset="1" stop-color="#2f6ad8"/></linearGradient>
<linearGradient id="tba" x1="0" y1="0" x2="0" y2="1"><stop offset="0" stop-color="#1a46b8"/><stop offset="0.2" stop-color="#1e4fc4"/><stop offset="1" stop-color="#1b48b4"/></linearGradient>
</defs>
<!-- windows flag -->
<path d="M9,523 Q12,522 14.5,523 L14,528 Q11.5,527 8.5,528 Z" fill="#f05a24"/>
<path d="M15.5,523 Q18,524 21,523 L20.5,528 Q17.5,529 15,528 Z" fill="#7ac142"/>
<path d="M8.3,529 Q11,528 13.8,529 L13.4,534 Q10.5,533 7.8,534 Z" fill="#3a8ae8"/>
<path d="M14.8,529 Q17.5,530 20.4,529 L20,534 Q17,535 14.4,534 Z" fill="#f4c01a"/>
<text x="27" y="533.5" font-family="Liberation Sans" font-style="italic" font-size="12.5" fill="#eef6ee" textLength="25" lengthAdjust="spacingAndGlyphs" style="text-shadow:1px 1px 0 #1a5a1a">開始</text>
<!-- quick launch -->
<path d="M78,525 L82,525 L83,526.5 L89,526.5 L89,534 L78,534 Z" fill="#f4d88a" stroke="#b89040" stroke-width="0.6"/>
<rect x="96" y="523" width="8" height="11" fill="#6ab8f0" stroke="#3a80c0" stroke-width="0.6" transform="rotate(-8 100 528)"/>
<path d="M114,524 L116,534 L120,534 L122,524 Z" fill="#c8a050"/><rect x="115" y="523" width="2" height="5" fill="#e04030"/><rect x="119" y="523" width="2" height="5" fill="#3a6ad0"/>
<circle cx="134" cy="528.5" r="5.5" fill="none" stroke="#3aa0f0" stroke-width="2"/><rect x="129" y="528" width="10" height="1.5" fill="#3aa0f0"/>
<circle cx="152" cy="528.5" r="6" fill="#e8483a"/><path d="M152,528.5 L157.2,525.5 A6,6 0 0 1 152,534.5 Z" fill="#f4c020"/><path d="M152,528.5 L152,534.5 A6,6 0 0 1 146.8,525.5 Z" fill="#3aa83a"/><circle cx="152" cy="528.5" r="2.6" fill="#3a7ae8" stroke="#fff" stroke-width="1"/>
<circle cx="170" cy="528.5" r="6" fill="#e86a1a"/><circle cx="171" cy="528" r="3.5" fill="#3a5ab0"/>
<rect x="182" y="524" width="10" height="9" fill="#6ab0f0" stroke="#fff" stroke-width="0.8"/>
<circle cx="203" cy="528.5" r="5.5" fill="#5ab0f0" stroke="#fff" stroke-width="1"/>
<rect x="215" y="523" width="12" height="11" fill="#fff" stroke="#c03030" stroke-width="0.8"/><text x="216" y="532.5" font-family="Liberation Sans" font-weight="bold" font-size="9" fill="#d02020">V</text><rect x="222" y="525" width="4" height="8" fill="#2a8a3a"/>
<text x="245" y="528" font-family="Liberation Sans" font-size="9" fill="#c8dcff">»</text>
<!-- buttons -->
<rect x="257" y="520.5" width="98" height="17" rx="3" fill="url(#tbb)"/>
<rect x="356" y="520.5" width="99" height="17" rx="3" fill="url(#tbb)"/>
<rect x="457" y="520.5" width="97" height="17" rx="3" fill="url(#tbb)"/>
<rect x="556" y="520.5" width="98" height="17" rx="3" fill="url(#tbb)"/>
<rect x="656" y="520.5" width="99" height="17" rx="3" fill="url(#tba)"/>
<!-- btn icons -->
<path d="M265,524 L272,523 L273,533 L266,534 Z" fill="#8ad0f4" stroke="#3a90c8" stroke-width="0.6"/>
<circle cx="370" cy="528.5" r="5.5" fill="#e8483a"/><path d="M370,528.5 L374.8,525.7 A5.5,5.5 0 0 1 370,534 Z" fill="#f4c020"/><path d="M370,528.5 L370,534 A5.5,5.5 0 0 1 365.2,525.7 Z" fill="#3aa83a"/><circle cx="370" cy="528.5" r="2.4" fill="#3a7ae8" stroke="#fff" stroke-width="0.9"/>
<path d="M465,525 L469,525 L470,526.5 L475,526.5 L475,533.5 L465,533.5 Z" fill="#f4d88a" stroke="#b89040" stroke-width="0.6"/>
<rect x="564" y="523.5" width="11" height="10" rx="1" fill="#e8703a" stroke="#b04a1a" stroke-width="0.6"/><circle cx="569.5" cy="528.5" r="3" fill="#fff" stroke="#b04a1a" stroke-width="0.8"/>
<rect x="664" y="523.5" width="11" height="10" rx="1" fill="#e8703a" stroke="#b04a1a" stroke-width="0.6"/><circle cx="669.5" cy="528.5" r="3" fill="#fff" stroke="#b04a1a" stroke-width="0.8"/>
<!-- keyboard icon -->
<rect x="764" y="525" width="12" height="8" rx="1" fill="#e8eef8" stroke="#334" stroke-width="0.7"/>
<g fill="#334"><rect x="766" y="527" width="8" height="1"/><rect x="766" y="529" width="8" height="1"/><rect x="766" y="531" width="8" height="1"/></g>
</svg>
<div class="tb" style="left:279px;top:520px"><span class="tt" style="transform:scaleX(0.89)">未命名 - 記事本</span></div>
<div class="tb" style="left:380px;top:520px"><span class="tt" style="transform:scaleX(0.85)">GPS相機分享景...</span></div>
<div class="tb" style="left:479px;top:520px;font-family:'Liberation Serif',serif"><span class="tt" style="transform:scaleX(0.88)">test-images</span></div>
<div class="tb" style="left:578px;top:520px;font-family:'Liberation Serif',serif"><span class="tt" style="transform:scaleX(0.92)">Update Available</span></div>
<div class="tb" style="left:678px;top:520px"><span class="tt" style="transform:scaleX(0.83)">DSC00036.JPG -...</span></div>
<div id="tray" class="a"></div>
<svg class="a" style="left:791px;top:517px" width="169" height="23" viewBox="791 517 169 23">
<circle cx="805" cy="528.5" r="5.5" fill="#f0c020" stroke="#6a4a10" stroke-width="0.8"/><path d="M802,527 Q805,532 808,527" fill="none" stroke="#222" stroke-width="1"/>
<rect x="812" y="523" width="10" height="11" fill="#f4e020"/><text x="812.5" y="532.5" font-family="Liberation Sans" font-weight="bold" font-size="9" fill="#d01010">ZA</text>
<rect x="825" y="523" width="8" height="7" fill="#8ab0e0" stroke="#3a5a90" stroke-width="0.6"/><rect x="829" y="527" width="8" height="7" fill="#6a90d0" stroke="#3a5a90" stroke-width="0.6"/>
<path d="M840,524 L847,528 L843,534 L838,530 Z" fill="#e84a3a" stroke="#3a5ab0" stroke-width="0.8"/>
<path d="M849,526 L860,526 L863,529 L860,532 L849,532 Z" fill="#5ac85a" opacity="0.85"/>
<circle cx="868" cy="528" r="4.5" fill="#c0c8d8" stroke="#4a5a7a" stroke-width="0.8"/><line x1="870" y1="531" x2="874" y2="535" stroke="#e0e0e0" stroke-width="1"/>
<rect x="877" y="522" width="13" height="13" fill="#f0a070" stroke="#fff" stroke-width="0.6"/><path d="M879,524 L888,533 M888,524 L879,533" stroke="#fff" stroke-width="1.6"/>
<rect x="892" y="522" width="13" height="13" fill="#fff" stroke="#1a2a80" stroke-width="0.8"/><path d="M895,524.5 L903,528.5 L895,532.5 Z" fill="#1a2ad0"/>
<text x="910" y="532.5" font-family="Liberation Sans" font-size="10" fill="#fff" textLength="40" lengthAdjust="spacingAndGlyphs">下午 10:45</text>
</svg>

<!--/BOT-->
<!--OVER-->
<div class="a" style="left:420px;top:264px;font:19px 'Liberation Serif',serif;color:#222;white-space:nowrap;line-height:22px;transform:scaleY(1.12);transform-origin:0 0">GPS <span style="font-size:20px;letter-spacing:0.5px">資料</span></div>
<svg class="a" style="left:0;top:0" width="960" height="540">
<rect x="405.5" y="252.5" width="116" height="56" rx="8" fill="none" stroke="#2ee03a" stroke-width="2.6"/>
<rect x="691.5" y="205.5" width="263" height="219" rx="9" fill="none" stroke="#3edc8e" stroke-width="2.6"/>
<g stroke="#30e030" stroke-width="2.6" stroke-linecap="round" fill="none">
<line x1="505" y1="276" x2="685" y2="241"/>
<line x1="685" y1="241" x2="661" y2="242"/>
<line x1="685" y1="241" x2="667" y2="252"/>
</g>
</svg>
<!--/OVER-->
</body></html>
